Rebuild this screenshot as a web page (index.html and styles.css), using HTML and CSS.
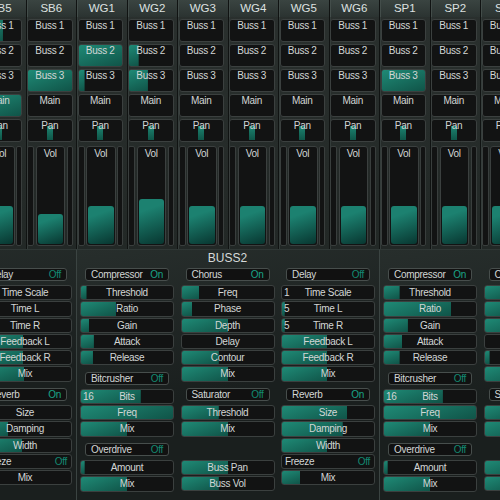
FILE: index.html
```html
<!DOCTYPE html>
<html lang="en">
<head>
  <meta charset="UTF-8" />
  <title>Mixer</title>
  <link rel="stylesheet" href="styles.css">
</head>
<body>

  <!-- Channel strips -->
  <div class="strips">
    <div class="strip">
      <div class="name">SB5</div>
      <div class="btn" style="--v:58%">Buss 1</div>
      <div class="btn">Buss 2</div>
      <div class="btn">Buss 3</div>
      <div class="btn" style="--v:100%">Main</div>
      <div class="btn pan">Pan</div>
      <div class="vol-area">
        <div class="meter"></div>
        <div class="vol"><span>Vol</span><div class="level" style="--v:39%"></div></div>
        <div class="meter r"></div>
      </div>
    </div>
    <div class="strip">
      <div class="name">SB6</div>
      <div class="btn">Buss 1</div>
      <div class="btn">Buss 2</div>
      <div class="btn" style="--v:100%">Buss 3</div>
      <div class="btn">Main</div>
      <div class="btn pan">Pan</div>
      <div class="vol-area">
        <div class="meter"></div>
        <div class="vol"><span>Vol</span><div class="level" style="--v:31%"></div></div>
        <div class="meter r"></div>
      </div>
    </div>
    <div class="strip">
      <div class="name">WG1</div>
      <div class="btn">Buss 1</div>
      <div class="btn" style="--v:100%">Buss 2</div>
      <div class="btn" style="--v:13%">Buss 3</div>
      <div class="btn">Main</div>
      <div class="btn pan">Pan</div>
      <div class="vol-area">
        <div class="meter"></div>
        <div class="vol"><span>Vol</span><div class="level" style="--v:39%"></div></div>
        <div class="meter r"></div>
      </div>
    </div>
    <div class="strip">
      <div class="name">WG2</div>
      <div class="btn">Buss 1</div>
      <div class="btn" style="--v:22%">Buss 2</div>
      <div class="btn" style="--v:43%">Buss 3</div>
      <div class="btn">Main</div>
      <div class="btn pan">Pan</div>
      <div class="vol-area">
        <div class="meter"></div>
        <div class="vol"><span>Vol</span><div class="level" style="--v:46%"></div></div>
        <div class="meter r"></div>
      </div>
    </div>
    <div class="strip">
      <div class="name">WG3</div>
      <div class="btn">Buss 1</div>
      <div class="btn">Buss 2</div>
      <div class="btn">Buss 3</div>
      <div class="btn">Main</div>
      <div class="btn pan">Pan</div>
      <div class="vol-area">
        <div class="meter"></div>
        <div class="vol"><span>Vol</span><div class="level" style="--v:39%"></div></div>
        <div class="meter r"></div>
      </div>
    </div>
    <div class="strip">
      <div class="name">WG4</div>
      <div class="btn">Buss 1</div>
      <div class="btn">Buss 2</div>
      <div class="btn">Buss 3</div>
      <div class="btn">Main</div>
      <div class="btn pan">Pan</div>
      <div class="vol-area">
        <div class="meter"></div>
        <div class="vol"><span>Vol</span><div class="level" style="--v:39%"></div></div>
        <div class="meter r"></div>
      </div>
    </div>
    <div class="strip">
      <div class="name">WG5</div>
      <div class="btn">Buss 1</div>
      <div class="btn">Buss 2</div>
      <div class="btn">Buss 3</div>
      <div class="btn">Main</div>
      <div class="btn pan">Pan</div>
      <div class="vol-area">
        <div class="meter"></div>
        <div class="vol"><span>Vol</span><div class="level" style="--v:39%"></div></div>
        <div class="meter r"></div>
      </div>
    </div>
    <div class="strip">
      <div class="name">WG6</div>
      <div class="btn">Buss 1</div>
      <div class="btn">Buss 2</div>
      <div class="btn">Buss 3</div>
      <div class="btn">Main</div>
      <div class="btn pan">Pan</div>
      <div class="vol-area">
        <div class="meter"></div>
        <div class="vol"><span>Vol</span><div class="level" style="--v:39%"></div></div>
        <div class="meter r"></div>
      </div>
    </div>
    <div class="strip">
      <div class="name">SP1</div>
      <div class="btn">Buss 1</div>
      <div class="btn">Buss 2</div>
      <div class="btn" style="--v:100%">Buss 3</div>
      <div class="btn">Main</div>
      <div class="btn pan">Pan</div>
      <div class="vol-area">
        <div class="meter"></div>
        <div class="vol"><span>Vol</span><div class="level" style="--v:39%"></div></div>
        <div class="meter r"></div>
      </div>
    </div>
    <div class="strip">
      <div class="name">SP2</div>
      <div class="btn">Buss 1</div>
      <div class="btn">Buss 2</div>
      <div class="btn">Buss 3</div>
      <div class="btn">Main</div>
      <div class="btn pan">Pan</div>
      <div class="vol-area">
        <div class="meter"></div>
        <div class="vol"><span>Vol</span><div class="level" style="--v:39%"></div></div>
        <div class="meter r"></div>
      </div>
    </div>
    <div class="strip">
      <div class="name">SP3</div>
      <div class="btn">Buss 1</div>
      <div class="btn">Buss 2</div>
      <div class="btn">Buss 3</div>
      <div class="btn">Main</div>
      <div class="btn pan">Pan</div>
      <div class="vol-area">
        <div class="meter"></div>
        <div class="vol"><span>Vol</span><div class="level" style="--v:39%"></div></div>
        <div class="meter r"></div>
      </div>
    </div>
  </div>

  <!-- Buss effect panels -->
  <div class="busses">

    <div class="buss">
      <h2>BUSS1</h2>
      <div class="cols">
        <div class="col">
          <div class="module">
            <div class="toggle"><span>Compressor</span><span class="on">On</span></div>
            <div class="slider" style="--v:6%"><i></i>Threshold<i></i></div>
            <div class="slider" style="--v:38%"><i></i>Ratio<i></i></div>
            <div class="slider" style="--v:9%"><i></i>Gain<i></i></div>
            <div class="slider" style="--v:14%"><i></i>Attack<i></i></div>
            <div class="slider" style="--v:13%"><i></i>Release<i></i></div>
          </div>
          <div class="module">
            <div class="toggle"><span>Bitcrusher</span><span class="off">Off</span></div>
            <div class="slider" style="--v:65%"><i>16</i>Bits<i></i></div>
            <div class="slider" style="--v:100%"><i></i>Freq<i></i></div>
            <div class="slider" style="--v:50%"><i></i>Mix<i></i></div>
          </div>
          <div class="module">
            <div class="toggle"><span>Overdrive</span><span class="off">Off</span></div>
            <div class="slider" style="--v:4%"><i></i>Amount<i></i></div>
            <div class="slider" style="--v:50%"><i></i>Mix<i></i></div>
          </div>
        </div>
        <div class="col">
          <div class="module">
            <div class="toggle"><span>Chorus</span><span class="on">On</span></div>
            <div class="slider" style="--v:19%"><i></i>Freq<i></i></div>
            <div class="slider" style="--v:11%"><i></i>Phase<i></i></div>
            <div class="slider" style="--v:50%"><i></i>Depth<i></i></div>
            <div class="slider"><i></i>Delay<i></i></div>
            <div class="slider" style="--v:40%"><i></i>Contour<i></i></div>
            <div class="slider" style="--v:50%"><i></i>Mix<i></i></div>
          </div>
          <div class="module">
            <div class="toggle"><span>Saturator</span><span class="off">Off</span></div>
            <div class="slider" style="--v:40%"><i></i>Threshold<i></i></div>
            <div class="slider" style="--v:50%"><i></i>Mix<i></i></div>
          </div>
          <div class="module output">
            <div class="slider" style="--v:50%"><i></i>Buss Pan<i></i></div>
            <div class="slider" style="--v:40%"><i></i>Buss Vol<i></i></div>
          </div>
        </div>
        <div class="col">
          <div class="module">
            <div class="toggle"><span>Delay</span><span class="off">Off</span></div>
            <div class="slider"><i>1</i>Time Scale<i></i></div>
            <div class="slider"><i>5</i>Time L<i></i></div>
            <div class="slider"><i>5</i>Time R<i></i></div>
            <div class="slider" style="--v:48%"><i></i>Feedback L<i></i></div>
            <div class="slider" style="--v:48%"><i></i>Feedback R<i></i></div>
            <div class="slider" style="--v:49%"><i></i>Mix<i></i></div>
          </div>
          <div class="module">
            <div class="toggle"><span>Reverb</span><span class="on">On</span></div>
            <div class="slider" style="--v:20%"><i></i>Size<i></i></div>
            <div class="slider" style="--v:32%"><i></i>Damping<i></i></div>
            <div class="slider" style="--v:47%"><i></i>Width<i></i></div>
            <div class="slider switch"><span>Freeze</span><span class="off">Off</span></div>
            <div class="slider" style="--v:20%"><i></i>Mix<i></i></div>
          </div>
        </div>
      </div>
    </div>

    <div class="buss">
      <h2>BUSS2</h2>
      <div class="cols">
        <div class="col">
          <div class="module">
            <div class="toggle"><span>Compressor</span><span class="on">On</span></div>
            <div class="slider" style="--v:6%"><i></i>Threshold<i></i></div>
            <div class="slider" style="--v:38%"><i></i>Ratio<i></i></div>
            <div class="slider" style="--v:9%"><i></i>Gain<i></i></div>
            <div class="slider" style="--v:14%"><i></i>Attack<i></i></div>
            <div class="slider" style="--v:13%"><i></i>Release<i></i></div>
          </div>
          <div class="module">
            <div class="toggle"><span>Bitcrusher</span><span class="off">Off</span></div>
            <div class="slider" style="--v:65%"><i>16</i>Bits<i></i></div>
            <div class="slider" style="--v:100%"><i></i>Freq<i></i></div>
            <div class="slider" style="--v:50%"><i></i>Mix<i></i></div>
          </div>
          <div class="module">
            <div class="toggle"><span>Overdrive</span><span class="off">Off</span></div>
            <div class="slider" style="--v:4%"><i></i>Amount<i></i></div>
            <div class="slider" style="--v:50%"><i></i>Mix<i></i></div>
          </div>
        </div>
        <div class="col">
          <div class="module">
            <div class="toggle"><span>Chorus</span><span class="on">On</span></div>
            <div class="slider" style="--v:19%"><i></i>Freq<i></i></div>
            <div class="slider" style="--v:11%"><i></i>Phase<i></i></div>
            <div class="slider" style="--v:50%"><i></i>Depth<i></i></div>
            <div class="slider"><i></i>Delay<i></i></div>
            <div class="slider" style="--v:40%"><i></i>Contour<i></i></div>
            <div class="slider" style="--v:50%"><i></i>Mix<i></i></div>
          </div>
          <div class="module">
            <div class="toggle"><span>Saturator</span><span class="off">Off</span></div>
            <div class="slider" style="--v:40%"><i></i>Threshold<i></i></div>
            <div class="slider" style="--v:50%"><i></i>Mix<i></i></div>
          </div>
          <div class="module output">
            <div class="slider" style="--v:50%"><i></i>Buss Pan<i></i></div>
            <div class="slider" style="--v:40%"><i></i>Buss Vol<i></i></div>
          </div>
        </div>
        <div class="col">
          <div class="module">
            <div class="toggle"><span>Delay</span><span class="off">Off</span></div>
            <div class="slider"><i>1</i>Time Scale<i></i></div>
            <div class="slider" style="--v:3%"><i>5</i>Time L<i></i></div>
            <div class="slider" style="--v:3%"><i>5</i>Time R<i></i></div>
            <div class="slider" style="--v:49%"><i></i>Feedback L<i></i></div>
            <div class="slider" style="--v:49%"><i></i>Feedback R<i></i></div>
            <div class="slider" style="--v:49%"><i></i>Mix<i></i></div>
          </div>
          <div class="module">
            <div class="toggle"><span>Reverb</span><span class="on">On</span></div>
            <div class="slider" style="--v:71%"><i></i>Size<i></i></div>
            <div class="slider" style="--v:66%"><i></i>Damping<i></i></div>
            <div class="slider" style="--v:49%"><i></i>Width<i></i></div>
            <div class="slider switch"><span>Freeze</span><span class="off">Off</span></div>
            <div class="slider" style="--v:20%"><i></i>Mix<i></i></div>
          </div>
        </div>
      </div>
    </div>

    <div class="buss">
      <h2>BUSS3</h2>
      <div class="cols">
        <div class="col">
          <div class="module">
            <div class="toggle"><span>Compressor</span><span class="on">On</span></div>
            <div class="slider" style="--v:17%"><i></i>Threshold<i></i></div>
            <div class="slider" style="--v:73%"><i></i>Ratio<i></i></div>
            <div class="slider" style="--v:26%"><i></i>Gain<i></i></div>
            <div class="slider" style="--v:20%"><i></i>Attack<i></i></div>
            <div class="slider" style="--v:17%"><i></i>Release<i></i></div>
          </div>
          <div class="module">
            <div class="toggle"><span>Bitcrusher</span><span class="off">Off</span></div>
            <div class="slider" style="--v:64%"><i>16</i>Bits<i></i></div>
            <div class="slider" style="--v:100%"><i></i>Freq<i></i></div>
            <div class="slider" style="--v:50%"><i></i>Mix<i></i></div>
          </div>
          <div class="module">
            <div class="toggle"><span>Overdrive</span><span class="off">Off</span></div>
            <div class="slider" style="--v:4%"><i></i>Amount<i></i></div>
            <div class="slider" style="--v:50%"><i></i>Mix<i></i></div>
          </div>
        </div>
        <div class="col">
          <div class="module">
            <div class="toggle"><span>Chorus</span><span class="on">On</span></div>
            <div class="slider" style="--v:30%"><i></i>Freq<i></i></div>
            <div class="slider" style="--v:30%"><i></i>Phase<i></i></div>
            <div class="slider" style="--v:50%"><i></i>Depth<i></i></div>
            <div class="slider"><i></i>Delay<i></i></div>
            <div class="slider" style="--v:5%"><i></i>Contour<i></i></div>
            <div class="slider" style="--v:50%"><i></i>Mix<i></i></div>
          </div>
          <div class="module">
            <div class="toggle"><span>Saturator</span><span class="off">Off</span></div>
            <div class="slider" style="--v:40%"><i></i>Threshold<i></i></div>
            <div class="slider" style="--v:50%"><i></i>Mix<i></i></div>
          </div>
          <div class="module output">
            <div class="slider" style="--v:50%"><i></i>Buss Pan<i></i></div>
            <div class="slider" style="--v:40%"><i></i>Buss Vol<i></i></div>
          </div>
        </div>
        <div class="col">
          <div class="module">
            <div class="toggle"><span>Delay</span><span class="off">Off</span></div>
            <div class="slider"><i>1</i>Time Scale<i></i></div>
            <div class="slider"><i>5</i>Time L<i></i></div>
            <div class="slider"><i>5</i>Time R<i></i></div>
            <div class="slider" style="--v:49%"><i></i>Feedback L<i></i></div>
            <div class="slider" style="--v:49%"><i></i>Feedback R<i></i></div>
            <div class="slider" style="--v:49%"><i></i>Mix<i></i></div>
          </div>
          <div class="module">
            <div class="toggle"><span>Reverb</span><span class="on">On</span></div>
            <div class="slider" style="--v:50%"><i></i>Size<i></i></div>
            <div class="slider" style="--v:50%"><i></i>Damping<i></i></div>
            <div class="slider" style="--v:50%"><i></i>Width<i></i></div>
            <div class="slider switch"><span>Freeze</span><span class="off">Off</span></div>
            <div class="slider" style="--v:20%"><i></i>Mix<i></i></div>
          </div>
        </div>
      </div>
    </div>

  </div>
</body>
</html>
```

FILE: styles.css
```css
:root {
  --text: #d2d6d5;
  --box: #121313;
  --edge: #3b403f;
  --fill: linear-gradient(160deg, #1f8a76, #105448);
  --on: #1aa488;
  --off: #138a72;
  --font: "Liberation Sans", sans-serif;
}

* {
  margin: 0;
  padding: 0;
  box-sizing: border-box;
}

body {
  width: 500px;
  height: 500px;
  overflow: hidden;
  background: #161a19;
  color: var(--text);
  font: 10px var(--font);
  letter-spacing: -0.3px;
}

/* channel strips */
.strips {
  display: flex;
  margin-left: -25px;
  height: 249px;
}

.strip {
  flex: 0 0 50.5px;
  display: flex;
  flex-direction: column;
  padding: 0 3.5px 0 0.5px;
  border-left: 1px solid #101312;
  background: linear-gradient(#2a302e, #222826);
  box-shadow: inset 1px 0 #343c3a;
}

.name {
  height: 17px;
  margin: 0 -3.5px 2px -0.5px;
  font-size: 11.5px;
  letter-spacing: 0;
  line-height: 17px;
  text-align: center;
  color: #dde1e0;
  background: linear-gradient(#3a4441, #2b3331);
  box-shadow: inset 1px 0 #434d4a;
}

.btn {
  height: 22.5px;
  margin-bottom: 2.5px;
  border: 1px solid var(--edge);
  border-radius: 3px;
  background: var(--fill) no-repeat var(--box);
  background-size: var(--v, 0%) 100%;
  text-align: center;
  line-height: 11px;
}

.pan {
  background: linear-gradient(#1d8571, #0f5548) no-repeat var(--box);
  background-size: 6px 14px;
  background-position: center bottom 1px;
}

.vol-area {
  display: flex;
  gap: 1.5px;
  height: 100.5px;
  margin-top: 1.5px;
}

.meter {
  width: 7px;
  border: 1px solid #393e3d;
  border-radius: 2px;
  background: var(--box);
}

.meter.r {
  width: 6px;
}

.vol {
  flex: 1;
  display: flex;
  flex-direction: column;
  justify-content: space-between;
  padding: 1px 1px 1.5px;
  border: 1px solid var(--edge);
  border-radius: 3px;
  background: var(--box);
  text-align: center;
  line-height: 11px;
}

.level {
  height: var(--v);
  border-radius: 3px;
  background: linear-gradient(160deg, #1c8170 25%, #083630);
}

/* buss panels */
.busses {
  display: flex;
  margin-left: -227.5px;
  height: 251px;
}

.buss {
  flex: 0 0 303px;
  padding: 0 3.5px;
  border-left: 1px solid #3b4442;
  border-top: 1px solid #2f3735;
  background: linear-gradient(170deg, #272e2c, #1a1f1e 55%);
}

.buss h2 {
  height: 18px;
  font-size: 12px;
  font-weight: normal;
  letter-spacing: 0;
  line-height: 17px;
  text-align: center;
  color: #d6dad9;
}

.cols {
  display: grid;
  grid-template-columns: repeat(3, 94px);
  column-gap: 6.5px;
}

.module + .module {
  margin-top: 6.5px;
}

.module.output {
  margin-top: 23px;
}

.toggle {
  display: flex;
  justify-content: space-between;
  height: 13px;
  margin: 0 5px 4px;
  padding: 0 5px 0 5px;
  border: 1px solid #474e4c;
  border-radius: 3px;
  background: #111;
  line-height: 11px;
}

.on {
  color: var(--on);
}

.off {
  color: var(--off);
}

.slider {
  display: grid;
  grid-template-columns: 1fr auto 1fr;
  height: 15.25px;
  margin-bottom: 1px;
  border: 1px solid var(--edge);
  border-radius: 3px;
  background: var(--fill) no-repeat var(--box);
  background-size: var(--v, 0%) 100%;
  line-height: 13px;
  white-space: nowrap;
}

.slider i {
  font-style: normal;
  padding-left: 2px;
}

.slider.switch {
  display: flex;
  justify-content: space-between;
  padding: 0 4px 0 3px;
}
```
